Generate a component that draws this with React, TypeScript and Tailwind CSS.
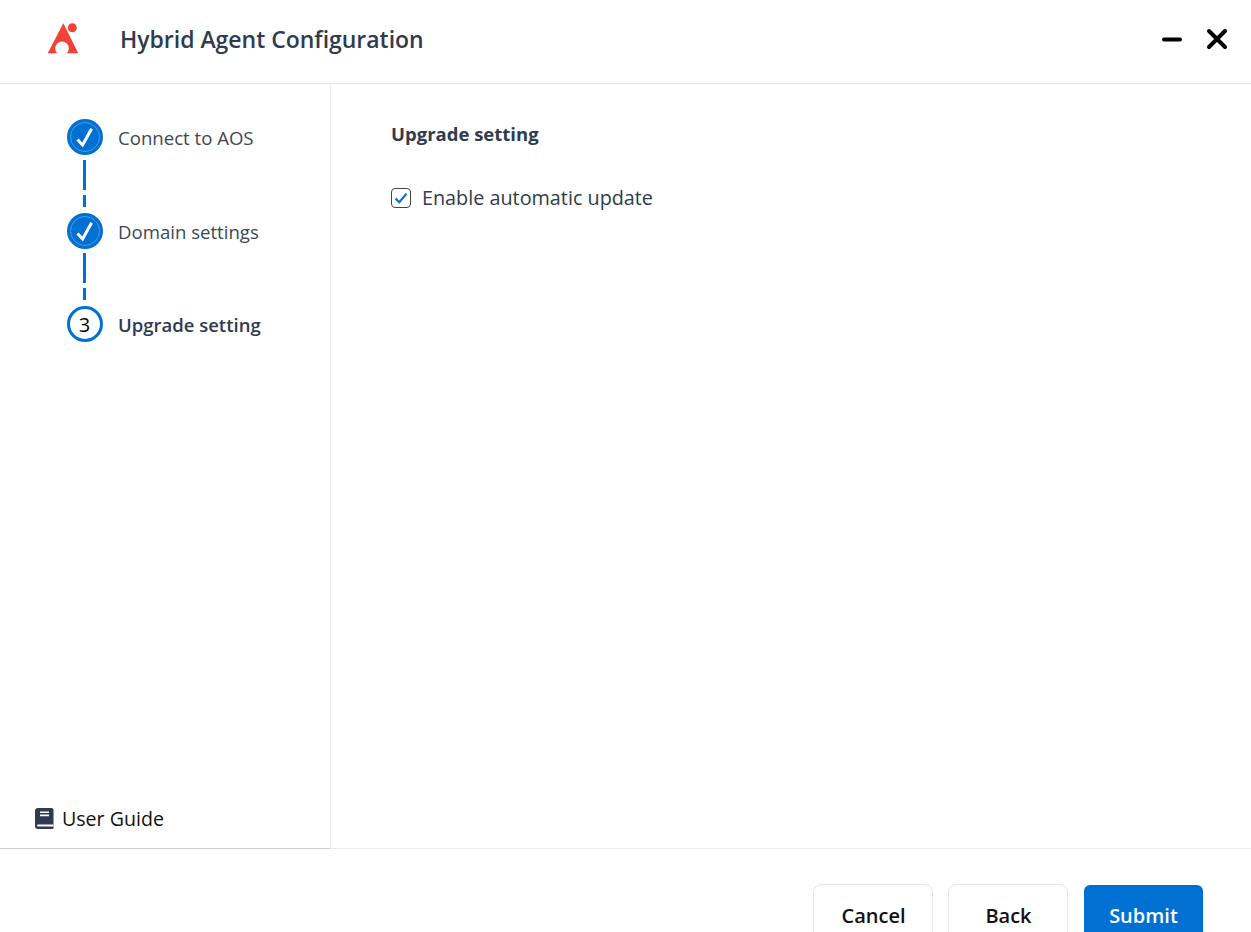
const STEPS = [
  { label: "Connect to AOS", done: true },
  { label: "Domain settings", done: true },
  { label: "Upgrade setting", done: false },
]

function Logo() {
  return (
    <svg width="34" height="34" viewBox="0 0 34 34" className="block">
      <path d="M17.3 1.3 L32.3 31.3 L1.7 31.3 Z" fill="#f44336" />
      <circle cx="16" cy="26.4" r="6.8" fill="#fff" />
      <circle cx="26.3" cy="5.7" r="4.5" fill="#f44336" />
    </svg>
  )
}

function BookIcon() {
  return (
    <svg width="19" height="21" viewBox="0 0 19 21" className="block">
      <path d="M3 0 H16.5 A2 2 0 0 1 18.5 2 V20 A1 1 0 0 1 17.5 21 H3 A3 3 0 0 1 0 18 V3 A3 3 0 0 1 3 0 Z" fill="#2f3b4e" />
      <path d="M5 4.2 H14 M5 7.4 H14" stroke="#fff" strokeWidth="1.6" />
      <path d="M3 16.6 H18.5 V18.6 H3 A1 1 0 0 1 3 16.6 Z" fill="#fff" />
    </svg>
  )
}

function StepCircle({ index, done }: { index: number; done: boolean }) {
  if (done) {
    return (
      <div className="flex h-9 w-9 items-center justify-center rounded-full bg-[#0070d2]">
        <div className="flex h-[30px] w-[30px] items-center justify-center rounded-full border border-[#4f9be0]">
          <svg width="36" height="36" viewBox="0 0 36 36" className="shrink-0">
            <path d="M10.5 20.5 L15.6 26 L24.6 9.8" fill="none" stroke="#fff" strokeWidth="3" />
          </svg>
        </div>
      </div>
    )
  }
  return (
    <div className="flex h-9 w-9 items-center justify-center rounded-full border-[3px] border-[#0070d2] bg-white pr-[1px] pt-[2px] text-[20px] text-black">
      {index}
    </div>
  )
}

function Connector({ first }: { first: boolean }) {
  return (
    <div className={first ? "flex h-[58px] w-[35px] flex-col items-center pt-[5px]" : "flex h-[57px] w-[35px] flex-col items-center pt-[4px]"}>
      <div className="h-[30px] w-[3px] bg-[#0070d2]" />
      <div className="mt-[5px] h-[12px] w-[3px] bg-[#0070d2]" />
    </div>
  )
}

export default function App() {
  return (
    <div className="flex h-[932px] w-[1251px] flex-col overflow-hidden bg-white font-['Open_Sans','Noto_Sans',sans-serif] text-[#2f3b4e]">
      <header className="flex h-[84px] shrink-0 items-center border-b border-[#e4e6e8] pb-[5px] pl-[46px] pr-[22px]">
        <Logo />
        <h1 className="ml-[40px] text-[23px] font-semibold tracking-[-0.02px]">Hybrid Agent Configuration</h1>
        <div className="ml-auto flex items-center gap-[21px]">
          <svg width="24" height="24" viewBox="0 0 24 24">
            <path d="M4 12.5 H20" stroke="#000" strokeWidth="4" strokeLinecap="round" />
          </svg>
          <svg width="24" height="24" viewBox="0 0 24 24">
            <path d="M4 4 L20 20 M20 4 L4 20" stroke="#000" strokeWidth="4" strokeLinecap="round" />
          </svg>
        </div>
      </header>

      <div className="flex min-h-0 flex-1">
        <aside className="flex w-[331px] shrink-0 flex-col border-r border-[#e9ebed]">
          <div className="flex flex-col pl-[67px] pt-[35px]">
            {STEPS.map((step, i) => (
              <div key={step.label}>
                <div className="flex h-9 items-center gap-[15px]">
                  <StepCircle index={i + 1} done={step.done} />
                  <span className={step.done ? "pt-[2px] text-[18.6px] text-[#3d4757]" : "pt-[2px] text-[18.5px] font-semibold"}>
                    {step.label}
                  </span>
                </div>
                {i < STEPS.length - 1 && <Connector first={i === 0} />}
              </div>
            ))}
          </div>
          <div className="mt-auto flex h-[59px] items-start gap-[8px] border-b border-[#c9cbce] pl-[35px] pt-[14px]">
            <div className="pt-[4px]">
              <BookIcon />
            </div>
            <span className="text-[19.6px] text-[#111]">User Guide</span>
          </div>
        </aside>
        <main className="flex-1 border-b border-[#e9ebed] pl-[60px] pt-[36px]">
          <h2 className="text-[18.5px] font-bold">Upgrade setting</h2>
          <label className="mt-[35px] flex items-center gap-[11px] text-[19.8px]">
            <span className="flex h-[20px] w-[20px] items-center justify-center rounded-[4px] border-[1.5px] border-[#3d4757]">
              <svg width="16" height="16" viewBox="0 0 16 16">
                <path d="M2.5 8.5 L6.3 12.2 L13.5 3.6" fill="none" stroke="#0070d2" strokeWidth="2.1" />
              </svg>
            </span>
            Enable automatic update
          </label>
        </main>
      </div>

      <footer className="flex h-[83px] shrink-0 justify-end gap-[15px] pr-[48px] pt-[35px]">
        <button type="button" className="h-[64px] w-[120px] rounded-[8px] border border-[#e4e6e8] bg-white pb-[1px] pl-[1px] text-[20px] font-semibold text-[#111]">
          Cancel
        </button>
        <button type="button" className="mr-[1px] h-[64px] w-[120px] rounded-[8px] border border-[#e4e6e8] bg-white pb-[1px] pl-[1px] text-[20px] font-semibold text-[#111]">
          Back
        </button>
        <button type="button" className="mt-[1px] h-[64px] w-[119px] rounded-[6px] bg-[#0070d2] pb-[3px] text-[20px] font-semibold text-white">
          Submit
        </button>
      </footer>
    </div>
  )
}
